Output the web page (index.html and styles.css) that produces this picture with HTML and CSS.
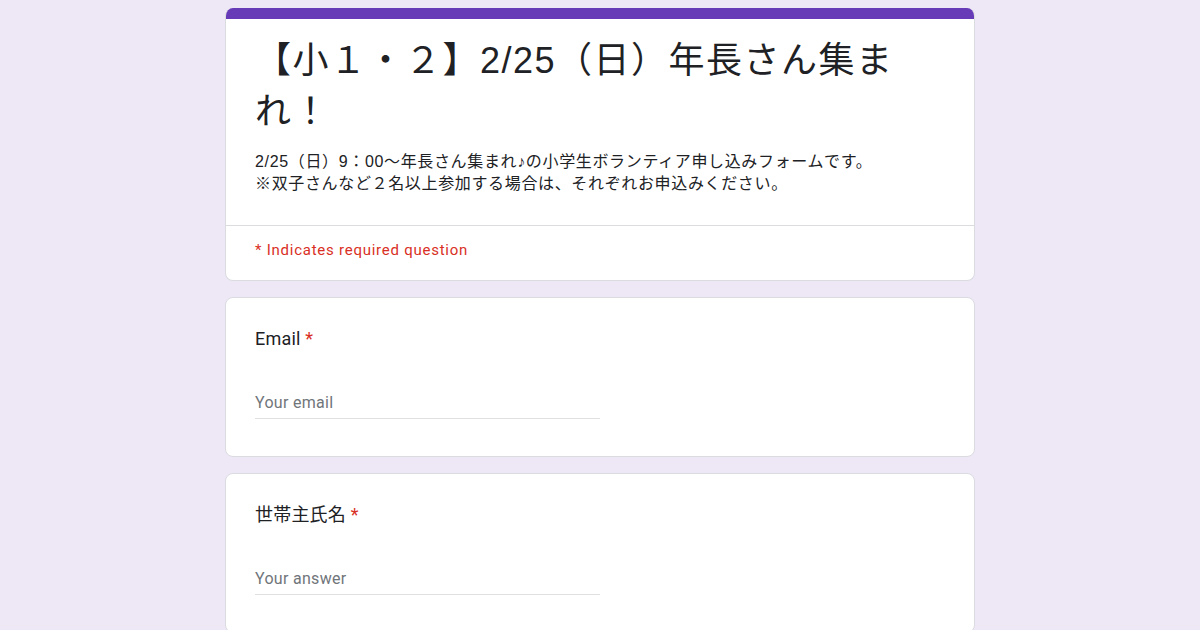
FILE: index.html
```html
<!DOCTYPE html>
<html lang="ja">
<head>
<meta charset="utf-8">
<title>【小１・２】2/25（日）年長さん集まれ！</title>
<link rel="stylesheet" href="styles.css">
</head>
<body>
<main class="form">
  <section class="card header-card">
    <div class="band"></div>
    <div class="header-body">
      <h1 class="title">【小１・２】2/25（日）年長さん集まれ！</h1>
      <p class="desc">2/25（日）9：00〜年長さん集まれ♪の小学生ボランティア申し込みフォームです。<br>※双子さんなど２名以上参加する場合は、それぞれお申込みください。</p>
    </div>
    <div class="required-note">* Indicates required question</div>
  </section>

  <section class="card question">
    <div class="label">Email <span class="req">*</span></div>
    <div class="input">Your email</div>
  </section>

  <section class="card question">
    <div class="label">世帯主氏名 <span class="req">*</span></div>
    <div class="input">Your answer</div>
  </section>
</main>
</body>
</html>
```

FILE: styles.css
```css
html, body {
  margin: 0;
  padding: 0;
}
body {
  background: #ede7f6;
  font-family: Roboto, "Noto Sans CJK JP", sans-serif;
  color: #202124;
  height: 630px;
  overflow: hidden;
}
.form {
  width: 750px;
  margin: 0 auto;
  padding-top: 8px;
  display: flex;
  flex-direction: column;
  gap: 16px;
}
.card {
  background: #fff;
  border: 1px solid #dadce0;
  border-radius: 8px;
  overflow: hidden;
}
.header-card {
  border-top: none;
}
.band {
  height: 11px;
  background: #673ab7;
  margin: 0 -1px;
}
.header-body {
  padding: 16px 29px 30px;
  border-bottom: 1px solid #dadce0;
}
.title {
  margin: 0;
  max-width: 660px;
  font-family: "Liberation Sans", "Noto Sans CJK JP", sans-serif;
  font-weight: 400;
  font-size: 36px;
  line-height: 51px;
  letter-spacing: 1.5px;
  color: #202124;
}
.desc {
  margin: 14px 0 0;
  font-family: "Liberation Sans", "Noto Sans CJK JP", sans-serif;
  font-size: 16px;
  line-height: 22px;
  letter-spacing: 0.65px;
  color: #202124;
}
.required-note {
  padding: 14px 29px 20px;
  font-size: 15px;
  line-height: 20px;
  letter-spacing: 0.75px;
  color: #d93025;
}
.question {
  padding: 29px 29px 37px;
}
.label {
  font-size: 18px;
  line-height: 24px;
  letter-spacing: 0.2px;
  color: #202124;
}
.req {
  color: #d93025;
}
.input {
  margin-top: 40px;
  width: 345px;
  font-size: 16px;
  line-height: 24px;
  letter-spacing: 0.3px;
  padding-bottom: 3px;
  color: #70757a;
  border-bottom: 1px solid #e0e0e0;
}
```
